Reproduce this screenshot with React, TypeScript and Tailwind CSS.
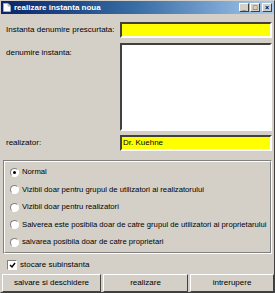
import React from 'react'

const font = { fontFamily: '"Liberation Sans", Arial, sans-serif' }

function Radio({ checked, label }: { checked?: boolean; label: string }) {
  return (
    <div className="flex h-[17.5px] items-center gap-[3px] pl-[5px]">
      <span className="relative inline-block h-[9px] w-[9px] shrink-0 rounded-full border border-t-[#808080] border-l-[#808080] border-b-white border-r-white bg-white">
        {checked && (
          <span className="absolute left-[2px] top-[2px] h-[3px] w-[3px] rounded-full bg-black" />
        )}
      </span>
      <span className="whitespace-nowrap text-[7.7px] text-black">{label}</span>
    </div>
  )
}

export default function App() {
  return (
    <div
      className="flex h-[293px] w-[275px] flex-col overflow-hidden border border-t-[#d4d0c8] border-l-[#d4d0c8] border-b-[#404040] border-r-[#404040] bg-[#d4d0c8]"
      style={font}
    >
      {/* Title bar */}
      <div className="flex h-[13px] items-center bg-gradient-to-r from-[#0a246a] via-[#3a6ea5] to-[#a6caf0] pl-[2px] pr-[2px]">
        <svg width="8" height="9" viewBox="0 0 8 9" className="mr-[3px]">
          <path d="M0.5 0.5 H5 L7.5 3 V8.5 H0.5 Z" fill="white" stroke="#c0c0c0" strokeWidth="0.6" />
          <path d="M5 0.5 V3 H7.5" fill="#e0e0e0" stroke="#808080" strokeWidth="0.6" />
        </svg>
        <span className="whitespace-nowrap text-[8px] font-bold leading-none text-white">realizare instanta noua</span>
        <div className="ml-auto flex gap-[1px]">
          {['_', '□', '×'].map((c, i) => (
            <span
              key={i}
              className={`flex h-[9px] w-[10px] items-center justify-center border border-t-white border-l-white border-b-[#404040] border-r-[#404040] bg-[#d4d0c8] text-[7px] font-bold leading-none text-black ${i === 2 ? 'ml-[1px]' : ''}`}
            >
              {c}
            </span>
          ))}
        </div>
      </div>

      <div className="flex flex-1 flex-col px-[2px]">
        {/* Short name */}
        <div className="mt-[8px] flex items-center">
          <span className="w-[117px] whitespace-nowrap pl-[3px] text-[8px] text-black">Instanta denumire prescurtata:</span>
          <div className="h-[16px] flex-1 border-2 border-t-[#404040] border-l-[#404040] border-b-white border-r-white bg-[#ffff00]" />
        </div>

        {/* Name */}
        <div className="mt-[5px] flex">
          <span className="w-[117px] whitespace-nowrap pl-[3px] pt-[4px] text-[8px] text-black">denumire instanta:</span>
          <div className="h-[88px] flex-1 border-2 border-t-[#404040] border-l-[#404040] border-b-white border-r-white bg-white" />
        </div>

        {/* Author */}
        <div className="mt-[4px] flex items-center">
          <span className="w-[117px] whitespace-nowrap pl-[3px] text-[8px] text-black">realizator:</span>
          <div className="flex h-[16px] flex-1 items-center border-2 border-t-[#404040] border-l-[#404040] border-b-white border-r-white bg-[#ffff00] pl-[1px] text-[8px] text-black">
            Dr. Kuehne
          </div>
        </div>

        {/* Visibility options */}
        <div className="mt-[9px] h-[94px] border border-t-[#808080] border-l-[#808080] border-b-white border-r-white">
          <div className="flex h-full flex-col justify-center border border-t-white border-l-white border-b-[#808080] border-r-[#808080]">
            <Radio checked label="Normal" />
            <Radio label="Vizibil doar pentru grupul de utilizatori ai realizatorului" />
            <Radio label="Vizibil doar pentru realizatori" />
            <Radio label="Salverea este posibila doar de catre grupul de utilizatori ai proprietarului" />
            <Radio label="salvarea posibila doar de catre proprietari" />
          </div>
        </div>

        {/* Sub-instance */}
        <div className="mt-[5px] flex h-[12px] items-center gap-[3px] pl-[4px]">
          <span className="flex h-[10px] w-[10px] items-center justify-center border border-t-[#808080] border-l-[#808080] border-b-white border-r-white bg-white">
            <svg width="7" height="7" viewBox="0 0 7 7">
              <path d="M1 3 L3 5 L6 1" fill="none" stroke="black" strokeWidth="1.4" />
            </svg>
          </span>
          <span className="whitespace-nowrap text-[8px] text-black">stocare subinstanta</span>
        </div>
      </div>

      {/* Buttons */}
      <div className="flex h-[18px] gap-[2px] pl-[1px]">
        {[
          ['salvare si deschidere', 'w-[99px]'],
          ['realizare', 'w-[85px]'],
          ['intrerupere', 'flex-1'],
        ].map(([label, w]) => (
          <button
            key={label}
            className={`${w} flex items-center justify-center whitespace-nowrap border border-t-white border-l-white border-b-[#404040] border-r-[#404040] bg-[#d4d0c8] text-[8px] text-black`}
          >
            {label}
          </button>
        ))}
      </div>
    </div>
  )
}
